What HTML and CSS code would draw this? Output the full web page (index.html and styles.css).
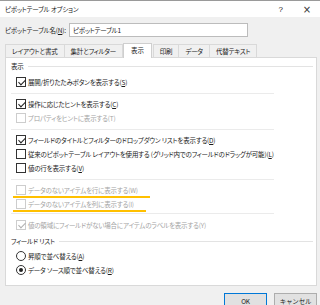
FILE: index.html
```html
<!DOCTYPE html>
<html lang="ja">
<head>
  <meta charset="UTF-8">
  <title>ピボットテーブル オプション</title>
  <link rel="stylesheet" href="styles.css">
</head>
<body>
  <div class="dialog">
    <div class="titlebar">
      <span class="title">ピボットテーブル オプション</span>
      <span class="help">?</span>
      <span class="close">×</span>
    </div>

    <div class="name-row">
      <label>ピボットテーブル名(<u>N</u>):</label>
      <div class="name-input">ピボットテーブル1</div>
    </div>

    <ul class="tabs">
      <li>レイアウトと書式</li>
      <li>集計とフィルター</li>
      <li class="active">表示</li>
      <li>印刷</li>
      <li>データ</li>
      <li>代替テキスト</li>
    </ul>

    <div class="panel">
      <div class="group-title">表示</div>
      <div class="option"><span class="box checked"></span>展開/折りたたみボタンを表示する(<u>S</u>)</div>
      <hr class="sep">
      <div class="option"><span class="box checked"></span>操作に応じたヒントを表示する(<u>C</u>)</div>
      <div class="option disabled"><span class="box"></span>プロパティをヒントに表示する(T)</div>
      <hr class="sep">
      <div class="option"><span class="box checked"></span>フィールドのタイトルとフィルターのドロップダウン リストを表示する(<u>D</u>)</div>
      <div class="option"><span class="box"></span>従来のピボットテーブル レイアウトを使用する (グリッド内でのフィールドのドラッグが可能)(<u>L</u>)</div>
      <div class="option"><span class="box"></span>値の行を表示する(<u>V</u>)</div>
      <hr class="sep">
      <div class="option disabled"><span class="mark"><span class="box"></span>データのないアイテムを行に表示する(W)</span></div>
      <div class="option disabled"><span class="mark"><span class="box"></span>データのないアイテムを列に表示する(I)</span></div>
      <hr class="sep last">
      <div class="option disabled"><span class="box checked"></span>値の領域にフィールドがない場合にアイテムのラベルを表示する(Y)</div>

      <div class="group-title second">フィールド リスト</div>
      <div class="option"><span class="radio"></span>昇順で並べ替える(<u>A</u>)</div>
      <div class="option"><span class="radio checked"></span>データ ソース順で並べ替える(<u>R</u>)</div>
    </div>

    <div class="buttons">
      <button class="btn default">OK</button>
      <button class="btn">キャンセル</button>
    </div>
  </div>
</body>
</html>
```

FILE: styles.css
```css
* {
  padding: 0;
  margin: 0;
  box-sizing: border-box;
}

body {
  font-family: "Noto Sans CJK JP", "Noto Sans", sans-serif;
  font-size: 6.5px;
  letter-spacing: -0.2px;
  font-feature-settings: "palt";
  color: #1a1a1a;
  background-color: #f0f0f0;
  width: 320px;
  height: 305px;
  overflow: hidden;
}

u {
  text-decoration-thickness: 1px;
  text-underline-offset: 1px;
}

.titlebar {
  height: 17px;
  background-color: #fff;
  border-top: 1px solid #9a9a9a;
  display: flex;
  align-items: center;
  padding: 0 5px;
}

.titlebar .title {
  flex: 1;
}

.titlebar .help {
  font-family: "Liberation Sans", sans-serif;
  font-size: 8px;
  margin-right: 20px;
}

.titlebar .close {
  font-family: "DejaVu Sans", sans-serif;
  font-size: 10px;
  color: #333;
  margin-right: 4px;
}

.name-row {
  display: flex;
  align-items: center;
  margin-top: 6px;
  padding-left: 5px;
  white-space: nowrap;
}

.name-row label {
  width: 64px;
}

.name-input {
  width: 179px;
  height: 14px;
  border: 1px solid #bcbcbc;
  background-color: #fff;
  padding-left: 3px;
  line-height: 12px;
}

.tabs {
  list-style-type: none;
  display: flex;
  align-items: flex-end;
  height: 14px;
  margin-top: 6px;
  padding-left: 5px;
  white-space: nowrap;
}

.tabs li {
  height: 13px;
  line-height: 12px;
  padding: 0 6px;
  border: 1px solid #d9d9d9;
  border-bottom: none;
  margin-right: -1px;
  background-color: #f0f0f0;
}

.tabs li.active {
  height: 15px;
  margin: 0 1px -1px;
  padding: 0 7px;
  background-color: #fff;
  border-color: #cfcfcf;
  position: relative;
  z-index: 1;
}

.panel {
  height: 229px;
  margin: 0 3px 0 5px;
  border: 1px solid #d9d9d9;
  background-color: #fff;
  padding: 2px 3px 0 5px;
}

.group-title {
  display: flex;
  align-items: center;
  gap: 4px;
  height: 12px;
  margin-bottom: 3px;
}

.group-title::after {
  content: "";
  flex: 1;
  height: 1px;
  background-color: #e3e3e3;
}

.group-title.second {
  margin-top: 3px;
  margin-bottom: 2px;
}

.option {
  display: flex;
  align-items: center;
  height: 14px;
  padding-left: 5px;
  white-space: nowrap;
}

.option.disabled {
  color: #a3a3a3;
}

.mark {
  display: inline-flex;
  align-items: center;
  height: 11px;
  padding: 0 12px 0 3px;
  margin-left: -3px;
  box-shadow: 0 2px 0 #ffc000;
}

.box {
  position: relative;
  width: 10px;
  height: 10px;
  border: 1px solid #333;
  margin-right: 2px;
  flex-shrink: 0;
}

.box.checked::after {
  content: "";
  position: absolute;
  left: 2.5px;
  top: 0px;
  width: 3px;
  height: 6px;
  border: solid #222;
  border-width: 0 1px 1px 0;
  transform: rotate(45deg);
}

.disabled .box {
  border-color: #cdcdcd;
}

.disabled .box.checked::after {
  border-color: #b0b0b0;
}

.radio {
  position: relative;
  width: 10px;
  height: 10px;
  border: 1px solid #333;
  border-radius: 50%;
  margin-right: 2px;
  flex-shrink: 0;
}

.radio.checked::after {
  content: "";
  position: absolute;
  left: 2px;
  top: 2px;
  width: 4px;
  height: 4px;
  border-radius: 50%;
  background-color: #222;
}

.sep {
  border: none;
  height: 1px;
  width: 263px;
  background-color: #ebebeb;
  margin: 4px 0 3px;
}

.sep.last {
  margin: 2px 0 4px;
}

.buttons {
  display: flex;
  justify-content: flex-end;
  gap: 7px;
  padding: 7px 3px 0 0;
}

.btn {
  font-family: inherit;
  font-size: 6.5px;
  letter-spacing: inherit;
  color: #1a1a1a;
  width: 43px;
  height: 15px;
  border: 1px solid #adadad;
  background-color: #e1e1e1;
}

.btn.default {
  border-color: #0078d7;
}
```
